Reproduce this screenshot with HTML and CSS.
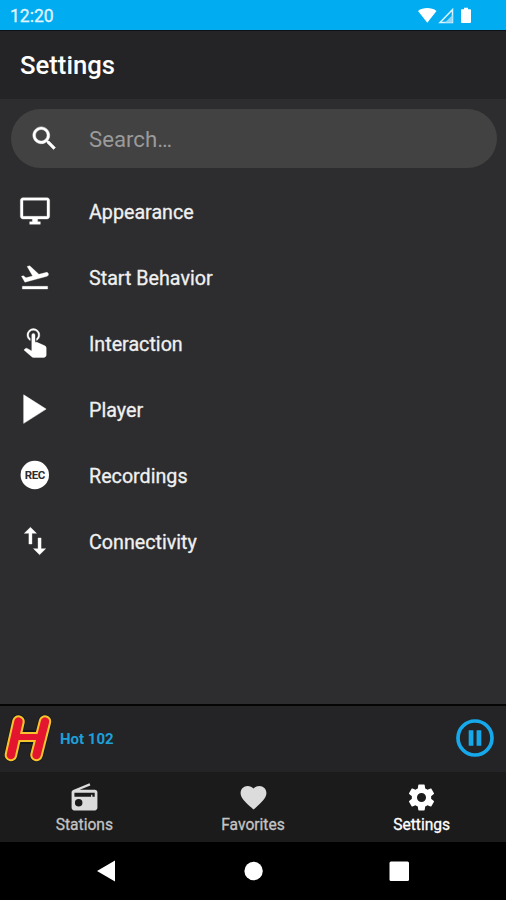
FILE: index.html
```html
<!DOCTYPE html>
<html lang="en">
<head>
    <meta charset="UTF-8">
    <meta name="viewport" content="width=device-width, initial-scale=1.0">
    <title>Settings</title>
    <link rel="stylesheet" href="styles.css">
</head>
<body>
    <div class="status-bar">
        <span class="clock">12:20</span>
        <svg class="status-icons" width="56" height="18" viewBox="0 0 56 18">
            <path d="M0 3.900C5 .1 13.500 .1 18.500 3.900L9.300 15.800z" fill="#fff"/>
            <path d="M22 15.500L34.500 2.700v12.800z" fill="none" stroke="#d9f2fd" stroke-width="1.500"/>
            <path d="M27 15.500L34.500 8v7.500z" fill="#8fd6f8"/>
            <path d="M46 .8h4v1.500h2q1 0 1 1v11.700q0 1-1 1h-8q-1 0-1-1v-11.700q0-1 1-1h2z" fill="#fff"/>
        </svg>
    </div>
    <header class="app-bar">
        <h1>Settings</h1>
    </header>
    <main class="content">
        <label class="search">
            <svg class="search-icon" viewBox="0 0 24 24"><path d="M15.500 14h-.79l-.28-.27C15.410 12.590 16 11.110 16 9.500 16 5.910 13.090 3 9.500 3S3 5.910 3 9.500 5.910 16 9.500 16c1.610 0 3.090-.59 4.230-1.570l.27.28v.79l5 4.990L20.490 19l-4.990-5zm-6 0C7.010 14 5 11.990 5 9.500S7.010 5 9.500 5 14 7.010 14 9.500 11.990 14 9.500 14z"/></svg>
            <input type="text" placeholder="Search…">
        </label>
        <ul class="menu">
            <li>
                <svg viewBox="0 0 24 24"><path d="M21 2H3c-1.100 0-2 .9-2 2v12c0 1.100.9 2 2 2h7v2H8v2h8v-2h-2v-2h7c1.100 0 2-.9 2-2V4c0-1.100-.9-2-2-2zm0 14H3V4h18v12z"/></svg>
                <span>Appearance</span>
            </li>
            <li>
                <svg viewBox="0 0 24 24"><path d="M2.500 19h19v2h-19zM22.070 9.640c-.21-.8-1.040-1.280-1.840-1.060L14.920 10l-6.900-6.430-1.930.51 4.140 7.170-4.970 1.330-1.970-1.540-1.450.39 2.590 4.490L21 11.490c.81-.23 1.280-1.050 1.070-1.850z"/></svg>
                <span>Start Behavior</span>
            </li>
            <li>
                <svg viewBox="2 4 20 20"><path d="M10 9A1 1 0 0 1 11 8A1 1 0 0 1 12 9V13.470L13.210 13.600L18.150 15.790C18.680 16.030 19 16.560 19 17.140V21.500C18.970 22.320 18.320 22.970 17.500 23H11C10.620 23 10.260 22.850 10 22.570L5.100 18.370L5.840 17.600C6.030 17.390 6.300 17.280 6.580 17.280H6.800L10 19V9M11 5A4 4 0 0 1 15 9C15 10.500 14.200 11.770 13 12.460V11.240C13.610 10.690 14 9.890 14 9A3 3 0 0 0 11 6A3 3 0 0 0 8 9C8 9.890 8.390 10.690 9 11.240V12.460C7.800 11.770 7 10.500 7 9A4 4 0 0 1 11 5Z"/></svg>
                <span>Interaction</span>
            </li>
            <li>
                <svg viewBox="5.7 4.1 15.7 15.7"><path d="M8 5v14l11-7z"/></svg>
                <span>Player</span>
            </li>
            <li>
                <svg viewBox="0 0 32 32">
                    <circle cx="15.800" cy="16" r="14.2"/>
                    <text class="rec" x="5.700" y="20.200" textLength="20.500">REC</text>
                </svg>
                <span>Recordings</span>
            </li>
            <li>
                <svg viewBox="1.5 1.5 21 21"><path d="M9 3L5 6.990h3V14h2V6.990h3L9 3zm7 14.010V10h-2v7.010h-3L15 21l4-3.990h-3z"/></svg>
                <span>Connectivity</span>
            </li>
        </ul>
    </main>
    <div class="now-playing">
        <svg class="station-logo" width="50" height="50" viewBox="0 0 50 50">
            <g class="logo-shadow"><path d="M16.500 7.500L8.900 41M43 7.500L34.500 41M13 22.900H39"/></g>
            <g class="logo-edge"><path d="M16.500 7.500L8.900 41M43 7.500L34.500 41"/><path class="bar" d="M13 22.900H39"/></g>
            <g class="logo-fill"><path d="M16.500 7.500L8.900 41M43 7.500L34.500 41"/><path class="bar" d="M13 22.900H39"/></g>
        </svg>
        <span class="station-name">Hot 102</span>
        <button class="pause" aria-label="Pause">
            <svg width="38" height="38" viewBox="0 0 38 38">
                <circle cx="19" cy="19" r="17" fill="none" stroke="#15a9ec" stroke-width="3.700"/>
                <path d="M12.700 11.300h4.700v15.400h-4.700zM20.600 11.300h4.700v15.400h-4.700z" fill="#15a9ec"/>
            </svg>
        </button>
    </div>
    <nav class="tabs">
        <a class="tab">
            <svg viewBox="0 0 24 24"><path d="M3.240 6.150C2.510 6.430 2 7.170 2 8v12c0 1.100.89 2 2 2h16c1.110 0 2-.9 2-2V8c0-1.110-.89-2-2-2H8.300l8.260-3.340L15.880 1 3.240 6.150zM7.500 19a2.900 2.900 0 1 1 0-5.800 2.900 2.900 0 0 1 0 5.800zM19.900 11.400h-1.800v-1.500h-1v1.500H4.200V8.300h15.700z"/></svg>
            <span>Stations</span>
        </a>
        <a class="tab">
            <svg viewBox="0 0 24 24"><path d="M12 21.350l-1.450-1.320C5.400 15.360 2 12.280 2 8.500 2 5.420 4.420 3 7.500 3c1.740 0 3.410.81 4.500 2.090C13.090 3.810 14.760 3 16.500 3 19.580 3 22 5.420 22 8.500c0 3.780-3.400 6.860-8.550 11.540L12 21.350z"/></svg>
            <span>Favorites</span>
        </a>
        <a class="tab active">
            <svg viewBox="0 0 24 24"><path d="M12 15.500A3.500 3.500 0 0 1 8.500 12A3.500 3.500 0 0 1 12 8.500A3.500 3.500 0 0 1 15.500 12A3.500 3.500 0 0 1 12 15.500M19.430 12.970C19.470 12.650 19.500 12.330 19.500 12C19.500 11.670 19.470 11.340 19.430 11L21.540 9.370C21.730 9.220 21.780 8.950 21.660 8.730L19.660 5.270C19.540 5.050 19.270 4.960 19.050 5.050L16.560 6.050C16.040 5.660 15.500 5.320 14.870 5.070L14.500 2.420C14.460 2.180 14.250 2 14 2H10C9.750 2 9.540 2.180 9.500 2.420L9.130 5.070C8.500 5.320 7.960 5.660 7.440 6.050L4.950 5.050C4.730 4.960 4.460 5.050 4.340 5.270L2.340 8.730C2.210 8.950 2.270 9.220 2.460 9.370L4.570 11C4.530 11.340 4.500 11.670 4.500 12C4.500 12.330 4.530 12.650 4.570 12.970L2.460 14.630C2.270 14.780 2.210 15.050 2.340 15.270L4.340 18.730C4.460 18.950 4.730 19.030 4.950 18.950L7.440 17.940C7.960 18.340 8.500 18.680 9.130 18.930L9.500 21.580C9.540 21.820 9.750 22 10 22H14C14.250 22 14.460 21.820 14.500 21.580L14.870 18.930C15.500 18.670 16.040 18.340 16.560 17.940L19.050 18.950C19.270 19.030 19.540 18.950 19.660 18.730L21.660 15.270C21.780 15.050 21.730 14.780 21.540 14.630L19.430 12.970Z"/></svg>
            <span>Settings</span>
        </a>
    </nav>
    <div class="system-nav">
        <svg width="22" height="22" viewBox="0 0 22 22"><path d="M1 11L19 .5v21z"/></svg>
        <svg width="22" height="22" viewBox="0 0 22 22"><circle cx="11.600" cy="11" r="9.2"/></svg>
        <svg width="22" height="22" viewBox="0 0 22 22"><rect x="1.500" y="1.500" width="19.500" height="19.500" rx="1.500"/></svg>
    </div>
</body>
</html>
```
FILE: styles.css
```css
* {
    box-sizing: border-box;
}
body {
    margin: 0;
    height: 100vh;
    display: flex;
    flex-direction: column;
    background-color: #2d2d2f;
    color: #f0f0f0;
    font-family: Roboto, "Liberation Sans", sans-serif;
    overflow: hidden;
}
svg {
    display: block;
    flex: none;
}
.status-bar {
    height: 30px;
    flex: none;
    display: flex;
    justify-content: space-between;
    align-items: center;
    padding: 1px 32px 0 10px;
    background-color: #02acf0;
}
.clock {
    font-size: 17.5px;
    color: #e2f5fd;
    -webkit-text-stroke: 0.3px #e2f5fd;
}
.app-bar {
    height: 69px;
    flex: none;
    display: flex;
    align-items: center;
    padding: 0 20px;
    background-color: #242426;
    border-top: 1px solid #0c1216;
}
.app-bar h1 {
    margin: 0;
    font-size: 25.7px;
    font-weight: 500;
    color: #fff;
}
.content {
    flex: 1;
    padding: 10px 9px 0 11px;
}
.search {
    height: 59px;
    display: flex;
    align-items: center;
    padding-left: 18px;
    border-radius: 30px;
    background-color: #424242;
}
.search-icon {
    width: 31px;
    height: 31px;
    fill: #fff;
    stroke: #fff;
    stroke-width: 0.4;
    margin-right: 29px;
}
.search input {
    flex: 1;
    min-width: 0;
    padding: 0;
    border: none;
    outline: none;
    background: none;
    color: #fff;
    font: 22.2px Roboto, "Liberation Sans", sans-serif;
}
.search input::placeholder {
    color: #9a9a9a;
}
.menu {
    list-style: none;
    margin: 9px 0 0;
    padding: 0;
}
.menu li {
    height: 66.1px;
    display: flex;
    align-items: center;
    gap: 38px;
    padding-left: 8px;
    font-size: 19.7px;
}
.menu svg {
    width: 32px;
    height: 32px;
    margin-top: 1px;
    fill: #fff;
}
.menu path {
    stroke: #fff;
    stroke-width: 0.25;
}
.menu span {
    padding-top: 4px;
    -webkit-text-stroke: 0.3px #f0f0f0;
}
.menu .rec {
    fill: #2d2d2f;
    font-size: 11.5px;
    font-weight: 700;
}
.now-playing {
    height: 68px;
    flex: none;
    display: flex;
    align-items: center;
    padding: 0 12px 0 2px;
    background-color: #242426;
    border-top: 2px solid #050505;
}
.station-logo {
    fill: none;
    stroke-linecap: round;
}
.logo-shadow {
    stroke: #141820;
    stroke-width: 14;
}
.logo-edge {
    stroke: #f6c52c;
    stroke-width: 12.5;
}
.logo-edge .bar {
    stroke-width: 10;
}
.logo-fill {
    stroke: #e4152f;
    stroke-width: 8.4;
}
.logo-fill .bar {
    stroke-width: 6;
}
.station-name {
    flex: 1;
    margin-left: 8px;
    font-size: 15px;
    font-weight: 700;
    color: #1d9fd9;
}
.pause {
    padding: 0 0 2px;
    border: none;
    background: none;
}
.tabs {
    height: 70px;
    flex: none;
    display: flex;
    background-color: #1b1b1b;
}
.tab {
    flex: 1;
    display: flex;
    flex-direction: column;
    align-items: center;
    padding-top: 10px;
    font-size: 15.6px;
    color: #c4c4c4;
    -webkit-text-stroke: 0.3px currentColor;
}
.tab svg {
    width: 31px;
    height: 31px;
    fill: #dcdcdc;
    margin-bottom: 3px;
}
.tab.active {
    color: #fff;
}
.tab.active svg {
    fill: #fff;
}
.system-nav {
    height: 58px;
    flex: none;
    display: flex;
    justify-content: center;
    align-items: center;
    gap: 124px;
    background-color: #000;
}
.system-nav svg {
    fill: #fff;
}
```
